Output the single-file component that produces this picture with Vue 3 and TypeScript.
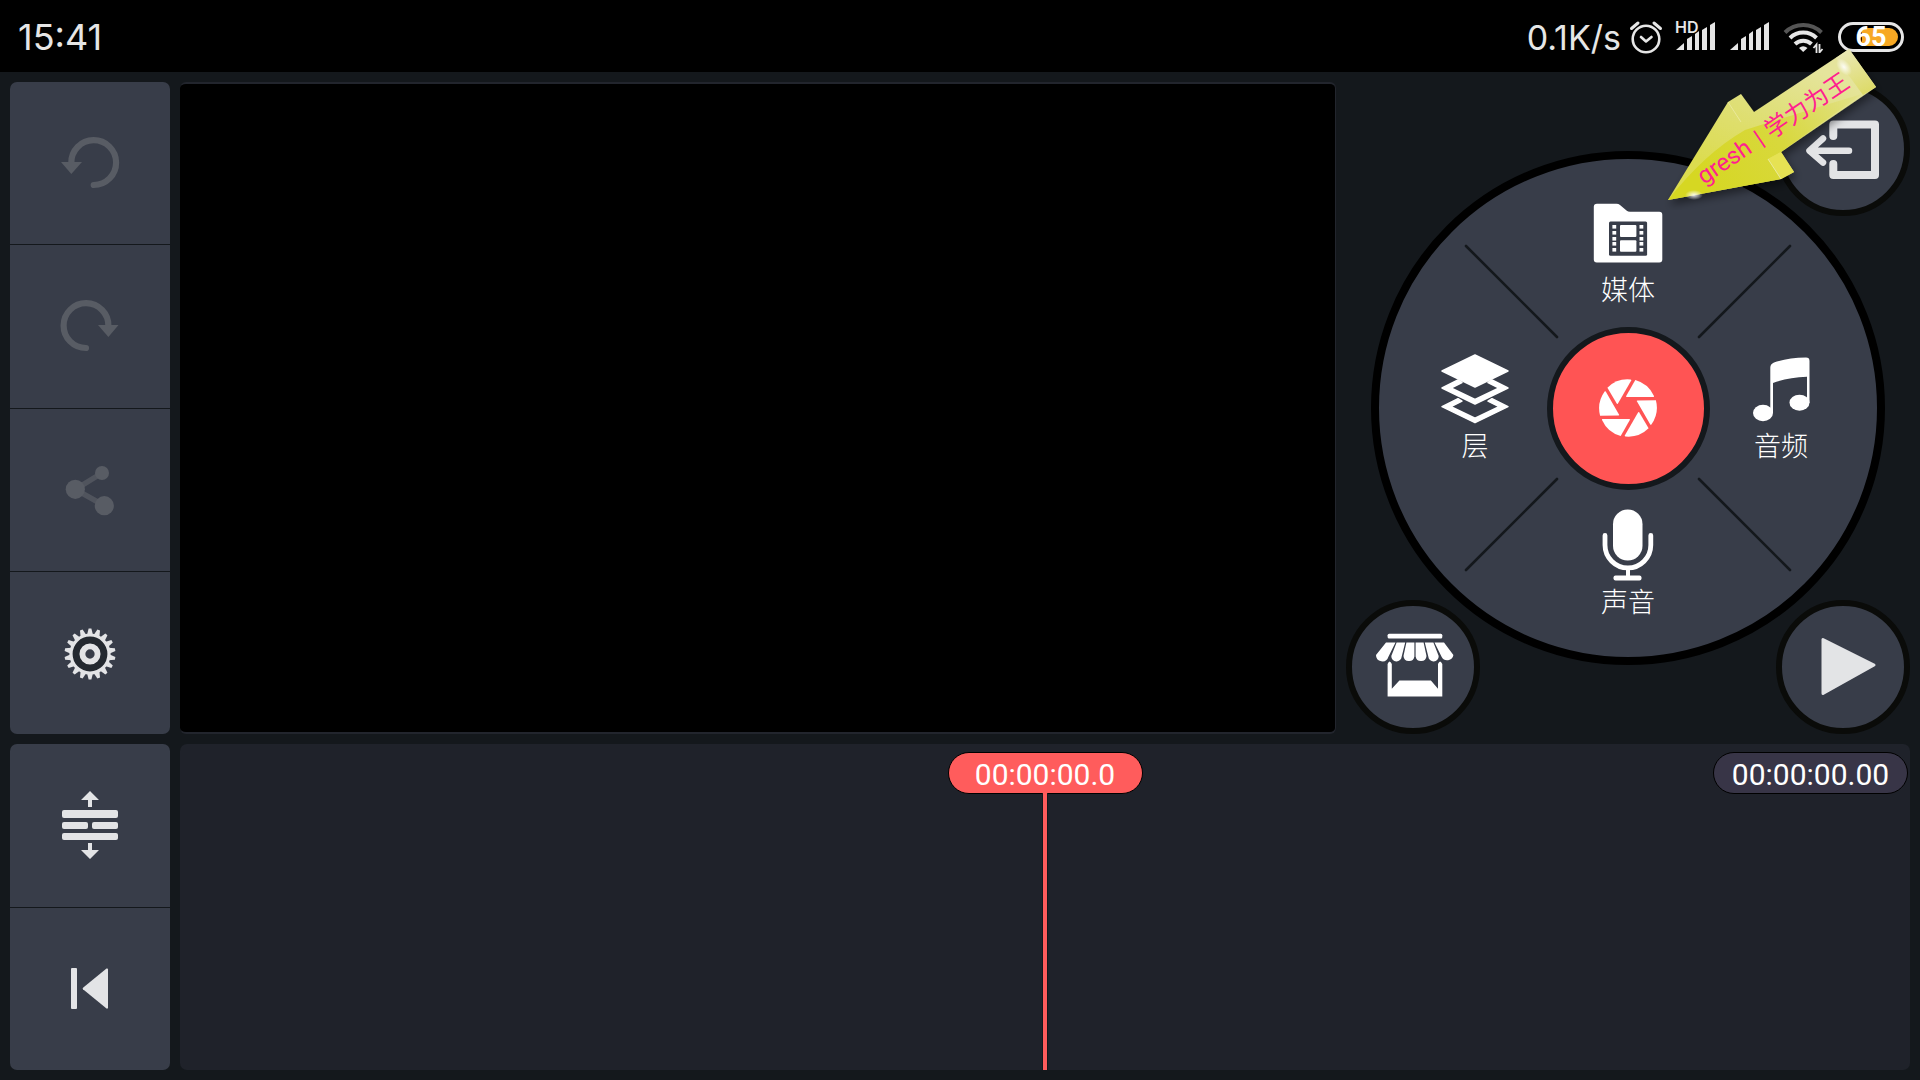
<script setup lang="ts">
import { ref } from 'vue'

const clock = ref('15:41')
const networkSpeed = ref('0.1K/s')
const batteryLevel = ref(65)
const currentTime = ref('00:00:00.0')
const totalTime = ref('00:00:00.00')

const gearTeeth: number[] = Array.from({ length: 18 }, (_, i) => i * 20)
const apertureBlades: number[] = Array.from({ length: 6 }, (_, i) => i * 60)
const sprocketRows: number[] = [28, 34, 40, 45, 51]
const signalBars: string[] = [
  'M1 29L9 22V29Z',
  'M12 29V18L17 15V29Z',
  'M20 29V13L24 10V29Z',
  'M27 29V9L32 6V29Z',
  'M35 29V4L40 1V29Z',
]
const awningStrips: string[] = [
  'M15 17.5H24.5L17.3 32A6.3 6.3 0 0 1 5 30Z',
  'M25.6 17.5H34.2L30.7 31.5A5.2 5.2 0 0 1 20.3 31Z',
  'M35.4 17.5H43.4V31.5A5.5 5.5 0 0 1 32.5 31Z',
  'M44.6 17.5H52.6L55.5 31A5.5 5.5 0 0 1 44.6 31.5Z',
  'M53.8 17.5H62.4L67.7 31A5.2 5.2 0 0 1 57.3 31.5Z',
  'M63.5 17.5H73L82.4 30A6.3 6.3 0 0 1 70.7 32Z',
]
</script>

<template>
  <div class="screen">
    <header class="status">
      <time class="clock">{{ clock }}</time>
      <div class="status-icons">
        <span class="speed">{{ networkSpeed }}</span>
        <svg class="alarm" width="34" height="34" viewBox="0 0 34 34" fill="none" stroke="#e6e6e6" stroke-linecap="round">
          <circle cx="17" cy="19" r="13.3" stroke-width="2.6" />
          <path d="M2.500 8.500L9 3M31.500 8.500L25 3" stroke-width="3" />
          <path d="M12 17L17 21.500L22.500 17" stroke-width="2.600" stroke-linejoin="round" />
        </svg>
        <span class="signal">
          <span class="hd">HD</span>
          <svg width="40" height="32" viewBox="0 0 40 32" fill="#e6e6e6">
            <path v-for="bar in signalBars" :key="bar" :d="bar" />
          </svg>
        </span>
        <svg width="40" height="32" viewBox="0 0 40 32" fill="#e6e6e6">
          <path v-for="bar in signalBars" :key="bar" :d="bar" />
        </svg>
        <svg width="41" height="32" viewBox="0 0 41 32" fill="none">
          <path d="M2 11.500A26 26 0 0 1 38.500 11.500" stroke="#555" stroke-width="4" />
          <path d="M7 17A19 19 0 0 1 33.500 17" stroke="#e6e6e6" stroke-width="4" />
          <path d="M12 23A12 12 0 0 1 28.500 23" stroke="#e6e6e6" stroke-width="4" />
          <path d="M16 27Q20 23.500 24.500 27L20.200 31Z" fill="#e6e6e6" />
          <path d="M33.500 32V23.500L30.500 27M36.500 23V31.500L39.500 28" stroke="#e6e6e6" stroke-width="1.800" />
        </svg>
        <span class="battery">
          <span class="battery-fill"></span>
          <span class="battery-text">{{ batteryLevel }}</span>
        </span>
      </div>
    </header>

    <main class="workspace">
      <nav class="tools" aria-label="Edit">
        <button type="button" aria-label="Undo" disabled>
          <svg width="64" height="64" viewBox="0 0 64 64">
            <path d="M13.300 32A22.400 22.400 0 1 1 35.700 54" fill="none" stroke="#585c64" stroke-width="6.200" stroke-linecap="round" />
            <path d="M3 31H24L13.300 43Z" fill="#585c64" />
          </svg>
        </button>
        <button type="button" aria-label="Redo" disabled>
          <svg width="64" height="64" viewBox="0 0 64 64">
            <path d="M50.400 32A22.400 22.400 0 1 0 28 54" fill="none" stroke="#585c64" stroke-width="6.200" stroke-linecap="round" />
            <path d="M40 31H60.500L50.400 43Z" fill="#585c64" />
          </svg>
        </button>
        <button type="button" aria-label="Share" disabled>
          <svg width="64" height="64" viewBox="0 0 64 64" fill="#585c64">
            <path d="M44 15L17.300 31.300L46.300 47.700" fill="none" stroke="#50545d" stroke-width="5.500" />
            <circle cx="17.300" cy="31.300" r="9.600" />
            <circle cx="44" cy="15" r="7" />
            <circle cx="46.300" cy="47.700" r="9.600" />
          </svg>
        </button>
        <button type="button" aria-label="Settings">
          <svg width="64" height="64" viewBox="-32 -33 64 64" fill="#e3e4e6">
            <path v-for="angle in gearTeeth" :key="angle" d="M-3 -19L-1.400 -25.500H1.400L3 -19Z" :transform="`rotate(${angle})`" />
            <circle r="19" fill="#242930" stroke="#e3e4e6" stroke-width="3.200" />
            <circle r="7.600" fill="#383d49" stroke="#e3e4e6" stroke-width="5.900" />
          </svg>
        </button>
      </nav>

      <section class="preview" aria-label="Preview"></section>

      <section class="controls" aria-label="Add content">
        <div class="wheel">
          <svg class="spokes" viewBox="-249 -249 498 498" stroke="#14181c" stroke-width="2.600" stroke-linecap="round">
            <path d="M-162 -162L-71 -71M162 -162L71 -71M-162 162L-71 71M162 162L71 71" />
          </svg>
          <button type="button" class="slice media">
            <svg width="72" height="72" viewBox="0 0 72 72" fill="#fff">
              <path d="M5 6.700H24.500Q26.500 6.700 28 8L34.500 13.500Q36 14.700 38 14.700H67.300Q70.300 14.700 70.300 17.700V62.400Q70.300 65.400 67.300 65.400H4.800Q1.800 65.400 1.800 62.400V9.700Q1.800 6.700 5 6.700Z" />
              <rect x="17" y="24.400" width="38.100" height="34.300" rx="1.500" fill="#383d49" />
              <rect x="28" y="28" width="16.400" height="12" rx="1" />
              <rect x="28" y="43.200" width="16.400" height="11.600" rx="1" />
              <template v-for="y in sprocketRows" :key="y">
                <rect x="20.400" :y="y" width="3.800" height="3.600" />
                <rect x="47.500" :y="y" width="3.800" height="3.600" />
              </template>
            </svg>
            <span>媒体</span>
          </button>
          <button type="button" class="slice layer">
            <svg width="72" height="72" viewBox="0 0 72 72" fill="#fff" stroke="#fff" stroke-width="1.500" stroke-linejoin="round">
              <path d="M36 2L69 18L36 34L3 18Z" />
              <path d="M19 27L3 35L36 51L69 35L53 27L49 29.500L60 35L36 46.500L12 35L23 29.500Z" />
              <path d="M19 45.700L3 53.700L36 69.700L69 53.700L53 45.700L49 48.200L60 53.700L36 65.200L12 53.700L23 48.200Z" />
            </svg>
            <span>层</span>
          </button>
          <button type="button" class="capture" aria-label="Capture">
            <svg width="60" height="60" viewBox="-30 -30 60 60" fill="#fff">
              <path v-for="angle in apertureBlades" :key="angle" d="M7.300 -28A29 29 0 0 1 26 -12Q26.200 -11 25.500 -11H-1.300Q-2.300 -11 -1.800 -12Z" :transform="`rotate(${angle})`" />
            </svg>
          </button>
          <button type="button" class="slice audio">
            <svg width="72" height="72" viewBox="0 0 72 72" fill="#fff">
              <path d="M25.300 60V14.500Q25.300 11 29 9.500Q42 5 61 4.600Q64.500 4.600 64.500 8V50H62V23.700Q42 24.500 28 30V60Z" />
              <ellipse cx="18" cy="60" rx="10" ry="8.200" />
              <ellipse cx="54.500" cy="49.700" rx="10" ry="8" />
            </svg>
            <span>音频</span>
          </button>
          <button type="button" class="slice voice">
            <svg width="72" height="72" viewBox="0 0 72 72" fill="#fff">
              <rect x="21" y="0.500" width="29.500" height="51" rx="14.750" />
              <path d="M13 26.500V36A22.900 22.900 0 0 0 58.800 36V26.500" fill="none" stroke="#fff" stroke-width="4.800" stroke-linecap="round" />
              <rect x="34" y="58" width="4" height="10" />
              <rect x="21.500" y="66.500" width="28" height="5" rx="2" />
            </svg>
            <span>声音</span>
          </button>
        </div>

        <button type="button" class="round exit" aria-label="Exit project">
          <svg width="80" height="80" viewBox="0 -1 80 80" fill="none" stroke="#e3e4e6" stroke-linecap="round" stroke-linejoin="round">
            <path d="M30.300 26V14.500H72V65H30.300V54" stroke-width="8" />
            <path d="M7 40.700H46M20 28.500L6.500 40.700L20 52.500" stroke-width="6.500" />
          </svg>
        </button>
        <button type="button" class="round store" aria-label="Asset store">
          <svg width="84" height="84" viewBox="0 0 84 84" fill="#fff">
            <rect x="16.600" y="8.800" width="54.700" height="4.700" rx="1.500" />
            <path v-for="strip in awningStrips" :key="strip" :d="strip" />
            <path d="M16.600 39Q18.500 34 20.800 39V63.800L28.400 55.500H59.900L67 63.800V39Q69 34 71.300 39V71.500H16.600Z" />
          </svg>
        </button>
        <button type="button" class="round play" aria-label="Play">
          <svg width="80" height="80" viewBox="0 0 80 80">
            <path d="M20 12.500V66.500L71 38Z" fill="#e3e4e6" stroke="#e3e4e6" stroke-width="3" stroke-linejoin="round" />
          </svg>
        </button>

        <svg class="pointer" width="224" height="170" viewBox="1660 40 224 170">
          <defs>
            <linearGradient id="arrowBody" gradientUnits="userSpaceOnUse" x1="1800" y1="65" x2="1760" y2="180">
              <stop offset="0" stop-color="#e5e49c" />
              <stop offset="0.450" stop-color="#dfdf78" />
              <stop offset="1" stop-color="#dcdc50" />
            </linearGradient>
            <linearGradient id="arrowTail" gradientUnits="userSpaceOnUse" x1="1849" y1="49" x2="1868" y2="92">
              <stop offset="0" stop-color="#e9e7b4" />
              <stop offset="1" stop-color="#dddb68" />
            </linearGradient>
            <linearGradient id="arrowShade" gradientUnits="userSpaceOnUse" x1="1850" y1="80" x2="1700" y2="185">
              <stop offset="0" stop-color="#dcdb60" stop-opacity="0.200" />
              <stop offset="0.500" stop-color="#d8d83c" />
              <stop offset="1" stop-color="#d6d722" />
            </linearGradient>
            <radialGradient id="arrowGlint">
              <stop offset="0" stop-color="#fff" stop-opacity="0.900" />
              <stop offset="1" stop-color="#fff" stop-opacity="0" />
            </radialGradient>
            <filter id="arrowShadow" x="-10%" y="-10%" width="120%" height="130%">
              <feDropShadow dx="2" dy="5" stdDeviation="4" flood-color="#000" flood-opacity="0.450" />
            </filter>
          </defs>
          <path filter="url(#arrowShadow)" fill="url(#arrowBody)" d="M1668 200L1728 102L1741 94L1754 112L1849 49L1876 87L1781 152L1794 172L1781 179Z" />
          <path fill="url(#arrowShade)" d="M1668 200Q1705 153 1745 130Q1790 116 1822 106L1862 94L1781 152L1768 159L1781 179Z" />
          <path fill="url(#arrowTail)" d="M1836 58L1849 49L1876 87L1863 95Z" />
          <path fill="#e6e253" d="M1768 159L1781 152L1794 172L1781 179Z" />
          <path fill="none" stroke="#eae99a" stroke-width="1" d="M1728 102L1741 122M1768 159L1781 179" />
          <ellipse cx="1844" cy="67" rx="10" ry="6" transform="rotate(50 1844 67)" fill="url(#arrowGlint)" />
          <ellipse cx="1694" cy="195" rx="9" ry="5" fill="url(#arrowGlint)" />
          <text class="pointer-text" transform="translate(1704 185) rotate(-34)">gresh <tspan dx="3">|</tspan> <tspan dx="1">学力为王</tspan></text>
        </svg>
      </section>
    </main>

    <footer class="editor">
      <nav class="tools" aria-label="Timeline tools">
        <button type="button" aria-label="Expand timeline">
          <svg width="72" height="72" viewBox="0 0 72 72" fill="#e3e4e6">
            <path d="M36 2L45 11H38V18H34V11H27Z" />
            <rect x="8" y="21" width="56" height="8" rx="2" />
            <rect x="8" y="33" width="26" height="7" rx="2" />
            <rect x="38" y="33" width="26" height="7" rx="2" />
            <rect x="8" y="44" width="56" height="7" rx="2" />
            <path d="M36 70L45 61H38V54H34V61H27Z" />
          </svg>
        </button>
        <button type="button" aria-label="Jump to start">
          <svg width="64" height="64" viewBox="0 0 64 64" fill="#e3e4e6">
            <rect x="13" y="11" width="6" height="41" rx="1" />
            <path d="M48.500 11.500Q50 11 50 12.500V50.500Q50 52 48.500 51.500L25 32.300Q24.300 31.500 25 30.700Z" />
          </svg>
        </button>
      </nav>
      <section class="timeline" aria-label="Timeline">
        <div class="playhead">
          <span class="pill current">{{ currentTime }}</span>
          <span class="needle"></span>
        </div>
        <span class="pill total">{{ totalTime }}</span>
      </section>
    </footer>
  </div>
</template>

<style>
body {
  margin: 0;
  background: #14181c;
}
</style>

<style scoped>
.screen {
  display: grid;
  grid-template-rows: 72px 2fr 1fr;
  gap: 10px;
  box-sizing: border-box;
  min-height: 100vh;
  padding-bottom: 10px;
  background: #14181c;
  color: #fff;
  font-family: Roboto, "Noto Sans CJK SC", sans-serif;
}

button {
  display: flex;
  align-items: center;
  justify-content: center;
  margin: 0;
  padding: 0;
  border: 0;
  background: none;
  color: inherit;
  font: inherit;
  cursor: pointer;
}

svg {
  display: block;
  flex: none;
}

.status {
  display: flex;
  align-items: center;
  justify-content: space-between;
  box-sizing: border-box;
  padding: 2px 16px 0 18px;
  background: #000;
  color: #e6e6e6;
  font-family: Inter, sans-serif;
}

.clock {
  font-size: 36px;
}

.status-icons {
  display: flex;
  align-items: center;
  gap: 14px;
}

.speed {
  margin-right: -6px;
  font-size: 34px;
}

.alarm {
  margin-right: -2px;
}

.signal {
  position: relative;
}

.hd {
  position: absolute;
  top: -2px;
  left: 0;
  font-size: 16px;
  font-weight: 600;
  line-height: 16px;
}

.battery {
  position: relative;
  box-sizing: border-box;
  width: 66px;
  height: 30px;
  border: 3px solid #e6e6e6;
  border-radius: 15px;
}

.battery-fill {
  position: absolute;
  top: 3px;
  right: 3px;
  width: 36px;
  height: 18px;
  border-radius: 4px 9px 9px 4px;
  background: #f7a823;
}

.battery-text {
  position: absolute;
  inset: 0;
  color: #fff;
  font-family: Roboto, sans-serif;
  font-size: 27px;
  font-weight: 700;
  line-height: 24px;
  text-align: center;
}

.workspace {
  display: grid;
  grid-template-columns: 160px 1fr 564px;
  gap: 10px;
  padding: 0 10px;
}

.editor {
  display: grid;
  grid-template-columns: 160px 1fr;
  gap: 10px;
  padding: 0 10px;
}

.tools {
  display: flex;
  flex-direction: column;
  gap: 1px;
  overflow: hidden;
  border-radius: 7px;
}

.tools button {
  flex: 1;
  background: #383d49;
}

.preview {
  border: solid #22252d;
  border-width: 2px 1px 2px 0;
  border-radius: 6px;
  background: #000;
}

.controls {
  position: relative;
  display: grid;
  grid-template: 1fr / 1fr;
}

.wheel {
  position: relative;
  display: grid;
  grid-area: 1 / 1;
  grid-template:
    ". media ." 149px
    "layer capture audio" 163px
    ". voice ." 149px
    / 143px 163px 143px;
  place-content: center;
  place-items: center;
  place-self: center;
  width: 498px;
  height: 498px;
  border: 8px solid #000;
  border-radius: 50%;
  background: #383d49;
}

.spokes {
  position: absolute;
  inset: 0;
}

.slice {
  position: relative;
  flex-direction: column;
  gap: 6px;
  font-size: 27px;
  font-weight: 300;
  line-height: 32px;
}

.media {
  grid-area: media;
}

.layer {
  grid-area: layer;
}

.audio {
  grid-area: audio;
}

.voice {
  grid-area: voice;
}

.capture {
  grid-area: capture;
  box-sizing: border-box;
  width: 163px;
  height: 163px;
  border: 6px solid #14181c;
  border-radius: 50%;
  background: #ff5454;
}

.round {
  z-index: 1;
  grid-area: 1 / 1;
  box-sizing: border-box;
  width: 134px;
  height: 134px;
  border: 6px solid #0a0b09;
  border-radius: 50%;
  background: #383d49;
}

.exit {
  place-self: start end;
}

.store {
  place-self: end start;
}

.play {
  place-self: end;
}

.pointer {
  position: absolute;
  z-index: 2;
  top: -42px;
  right: 26px;
  pointer-events: none;
}

.pointer-text {
  fill: #ff1f8f;
  font-size: 24px;
}

.timeline {
  position: relative;
  border-radius: 7px;
  background: #1f222a;
}

.pill {
  box-sizing: border-box;
  width: 195px;
  height: 42px;
  border: 1px solid #000;
  border-radius: 21px;
  font-size: 30px;
  line-height: 44px;
  text-align: center;
}

.playhead {
  position: absolute;
  inset: 8px 0 0;
  display: flex;
  flex-direction: column;
  align-items: center;
}

.current {
  background: #ff5c5c;
}

.needle {
  flex: 1;
  width: 4px;
  margin-top: -1px;
  border: solid #14181c;
  border-width: 0 1px;
  background: #ff5c5c;
}

.total {
  position: absolute;
  top: 8px;
  right: 2px;
  background: #383547;
}
</style>
